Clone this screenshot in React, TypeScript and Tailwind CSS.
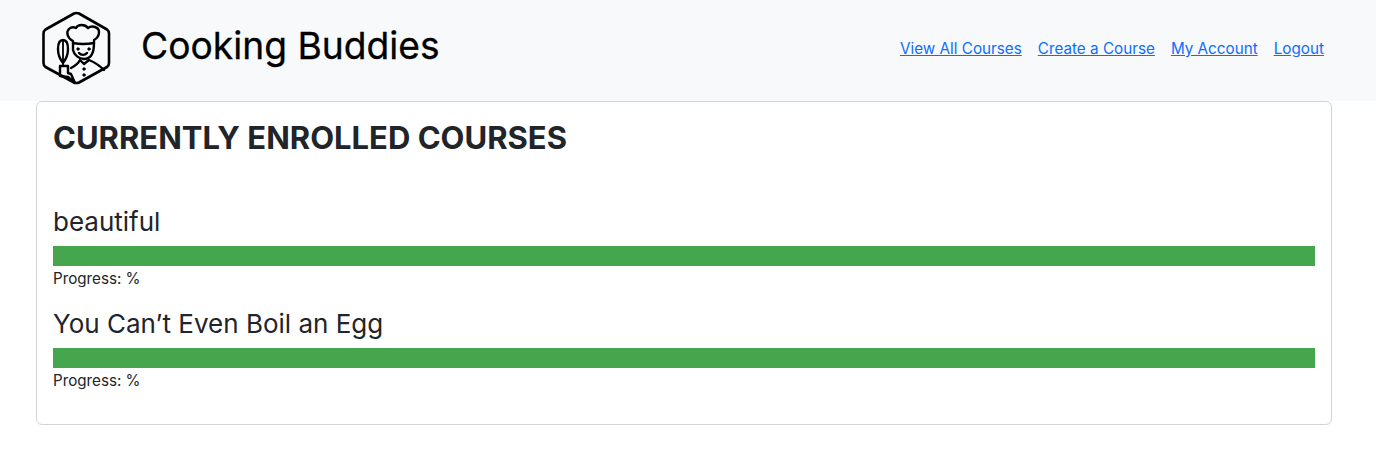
import React from "react";

function Logo() {
  return (
    <svg width="72" height="76" viewBox="40 10 72 76" fill="none" stroke="#000" strokeLinecap="round" strokeLinejoin="round" className="shrink-0">
      <path d="M74 13.500 Q76.500 12.500 79 13.500 L107 29.500 Q109 31 109 33.500 L109 63 Q109 65.500 107 67 L79 82.500 Q76.500 83.500 74 82.500 L45.500 67 Q43.500 65.500 43.500 63 L43.500 33.500 Q43.500 31 45.500 29.500 Z" strokeWidth="2.6" />
      <path d="M73 41 C67 38 66 32 69 29 C71 27 74 27 76 28 C78 24 85 24 88 28 C92 25 99 27 99 32 C99 37 96 39 94 40 L94 43 Q83 45 73 43 Z" strokeWidth="2.4" />
      <path d="M73 43 L73 50 C74 55 79 59 84 59 C90 59 94 54 94 43" strokeWidth="2.4" />
      <path d="M79 53 C81 55.500 85 55.500 87 53" strokeWidth="2.4" />
      <circle cx="78" cy="49" r="1.2" fill="#000" />
      <circle cx="89" cy="49" r="1.2" fill="#000" />
      <path d="M63 63 C59 58 58 53 58 49 C58 43 60 40 63 40 C66 40 68 43 68 49 C68 53 67 58 63 63 Z" strokeWidth="2.4" />
      <path d="M63 40 L63 63 M63 63 L63 66" strokeWidth="1.8" />
      <path d="M60 73 L60 66 L68 66 L68 73 L71 74 L75 83 L68 77 L60 76 Z" strokeWidth="2.4" />
      <path d="M71 68 C75 66 78 64 80 60 L84 64 L89 60 C94 62 100 66 104 70" strokeWidth="2.4" />
      <circle cx="84" cy="69" r="1.2" fill="#000" />
      <circle cx="84" cy="75" r="1.2" fill="#000" />
    </svg>
  );
}

function Course({ title }: { title: string }) {
  return (
    <div className="mb-[16.400px]">
      <h4 className="text-[26px] leading-[33.600px] font-normal text-[#212529] mb-[7.500px]">{title}</h4>
      <div className="h-5 bg-[#46a64e]" />
      <p className="text-[15.200px] leading-[24px] text-[#212529] pt-px">Progress: %</p>
    </div>
  );
}

export default function App() {
  const links = ["View All Courses", "Create a Course", "My Account", "Logout"];
  return (
    <div className="min-h-[471px] bg-white font-['Inter',sans-serif]">
      <nav className="h-[101px] bg-[#f8f9fa] pl-[40px] pr-[52px] flex items-center justify-between">
        <div className="flex items-center gap-[29px] -mt-[5px]">
          <Logo />
          <span className="text-[37.200px] leading-[60px] [-webkit-text-stroke:0.3px_#000] text-black -mt-[5px]">Cooking Buddies</span>
        </div>
        <div className="flex gap-4 -mt-[3px] text-[15.250px] leading-[24px]">
          {links.map((l) => (
            <a key={l} href="#" className="text-[#0d6efd] underline">{l}</a>
          ))}
        </div>
      </nav>
      <div className="ml-[36px] mr-[44px] h-[324px] border border-[#d3d4d5] rounded-[6px] px-4 pt-[17px] bg-white">
        <h3 className="text-[31px] leading-[38.400px] font-bold text-[#212529] mb-[47.500px]">CURRENTLY ENROLLED COURSES</h3>
        <Course title="beautiful" />
        <Course title="You Can’t Even Boil an Egg" />
      </div>
    </div>
  );
}
